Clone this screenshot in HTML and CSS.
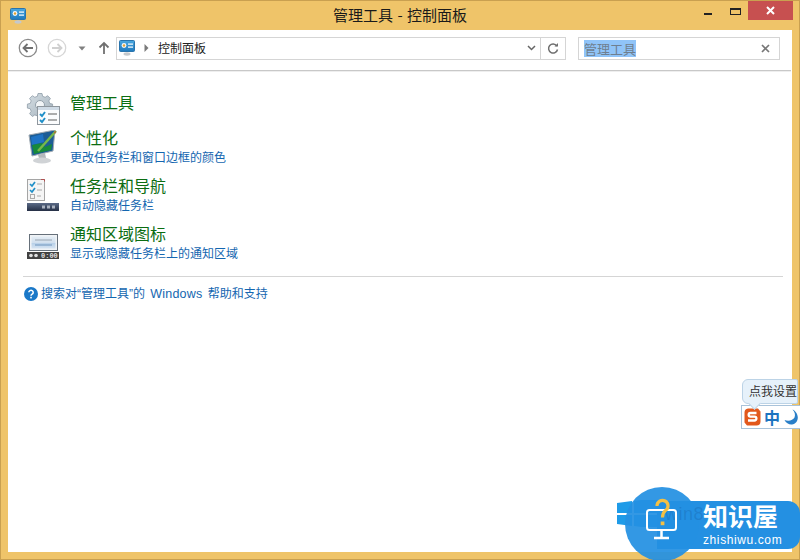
FILE: index.html
```html
<!DOCTYPE html>
<html lang="zh">
<head>
<meta charset="utf-8">
<title>管理工具 - 控制面板</title>
<link rel="stylesheet" href="styles.css">
</head>
<body>
<svg width="0" height="0" class="defs">
  <defs>
    <linearGradient id="cpBlue" x1="0" y1="0" x2="0" y2="1"><stop offset="0" stop-color="#4aa8e0"/><stop offset="1" stop-color="#1f79bd"/></linearGradient>
    <linearGradient id="barNavy" x1="0" y1="0" x2="0" y2="1"><stop offset="0" stop-color="#5a6a86"/><stop offset="1" stop-color="#252f45"/></linearGradient>
    <linearGradient id="gearGrey" x1="0" y1="0" x2="1" y2="1"><stop offset="0" stop-color="#d5dee4"/><stop offset="1" stop-color="#a3b1bb"/></linearGradient>
    <linearGradient id="paneBlue" x1="0" y1="0" x2="0" y2="1"><stop offset="0" stop-color="#e4edf5"/><stop offset="0.5" stop-color="#d2e0ee"/><stop offset="0.55" stop-color="#b8d0e8"/><stop offset="1" stop-color="#d6e4f2"/></linearGradient>
    <symbol id="cp" viewBox="0 0 16 16">
      <rect x="0.500" y="0.500" width="15" height="11" rx="1" fill="url(#cpBlue)" stroke="#2a74ac"/>
      <circle cx="5" cy="5.500" r="2.400" fill="#f4f8fb"/>
      <circle cx="5" cy="5.500" r="1.200" fill="#e0a030"/>
      <rect x="9" y="3.500" width="5" height="1.200" fill="#fff"/>
      <rect x="9" y="6.500" width="5" height="1.200" fill="#fff"/>
      <ellipse cx="8" cy="14" rx="3.500" ry="1.700" fill="#c4c8cc"/>
    </symbol>
  </defs>
</svg>
<div class="window">
  <header class="titlebar">
    <svg class="title-icon"><use href="#cp"/></svg>
    <div class="title">管理工具 - 控制面板</div>
    <div class="controls">
      <span class="min"></span>
      <span class="max"></span>
      <div class="close"><svg width="9" height="9" viewBox="0 0 9 9"><path d="M1 1l7 7M8 1l-7 7" stroke="#fff" stroke-width="2"/></svg></div>
    </div>
  </header>
  <main class="client">
    <nav class="toolbar">
      <svg class="nav-btn" viewBox="0 0 20 20"><circle cx="10" cy="10" r="8.700" fill="#fff" stroke="#8a8a8a" stroke-width="1.300"/><path d="M15 10H6M9.500 6L5.500 10l4 4" fill="none" stroke="#707070" stroke-width="1.800"/></svg>
      <svg class="nav-btn next" viewBox="0 0 20 20"><circle cx="10" cy="10" r="8.700" fill="#fff" stroke="#d6d6d6" stroke-width="1.300"/><path d="M5 10h9M10.500 6l4 4-4 4" fill="none" stroke="#d0d0d0" stroke-width="1.800"/></svg>
      <svg class="drop" viewBox="0 0 8 5"><path d="M0.500 0.500h7L4 4.500z" fill="#808080"/></svg>
      <svg class="up" viewBox="0 0 12 14"><path d="M6 13V2M1.500 6.500L6 2l4.500 4.500" fill="none" stroke="#707070" stroke-width="1.800"/></svg>
      <div class="address">
        <svg class="addr-icon"><use href="#cp"/></svg>
        <svg class="crumb" viewBox="0 0 5 8"><path d="M0.500 0v8L4.500 4z" fill="#7a7a7a"/></svg>
        <span class="addr-text">控制面板</span>
        <svg class="addr-chev" viewBox="0 0 9 6"><path d="M1 1l3.500 3.500L8 1" fill="none" stroke="#666" stroke-width="1.500"/></svg>
        <div class="refresh"><svg width="12" height="13" viewBox="0 0 12 13"><path d="M9.800 4A4.500 4.500 0 1 0 10.500 7.500" fill="none" stroke="#707070" stroke-width="1.500"/><path d="M7.500 4.500h3.500V1z" fill="#707070"/></svg></div>
      </div>
      <div class="search">
        <span class="search-text">管理工具</span>
        <svg class="clear" viewBox="0 0 9 9"><path d="M1 1l7 7M8 1l-7 7" stroke="#777" stroke-width="1.700"/></svg>
      </div>
    </nav>
    <div class="rule-top"></div>
    <section class="results">
      <div class="item item-first">
        <svg class="item-icon" viewBox="0 0 34 34">
          <path d="M12 0.500h4l.6 2.800 2.600 1 2.400-1.600 2.800 2.800-1.600 2.400 1 2.600 2.800.6v4l-2.800.6-1 2.600 1.600 2.400-2.800 2.800-2.400-1.600-2.600 1-.6 2.800h-4l-.6-2.800-2.600-1-2.400 1.600-2.800-2.800 1.600-2.400-1-2.600-2.800-.6v-4l2.800-.6 1-2.600-1.600-2.400 2.800-2.800 2.400 1.600 2.600-1z" fill="url(#gearGrey)" stroke="#8f9da8" stroke-width="0.800"/>
          <circle cx="14" cy="12" r="4.500" fill="#f2f5f7" stroke="#93a0aa"/>
          <rect x="11.500" y="13.500" width="22" height="18" fill="#fbfcfd" stroke="#8f979e"/>
          <rect x="12" y="14" width="21" height="3" fill="#cfdbe6"/>
          <path d="M14 21l2 2 3-4M14 27l2 2 3-4" fill="none" stroke="#1f8fc8" stroke-width="1.900"/>
          <path d="M22 21h9M22 27h9" stroke="#5d5d5d" stroke-width="1.100"/>
        </svg>
        <div class="item-text"><a class="item-title">管理工具</a></div>
      </div>
      <div class="item">
        <svg class="item-icon item-icon-low" viewBox="0 0 34 34">
          <path d="M3 5L29 0 27 21 6 26z" fill="#1d5d95" stroke="#a3abb2"/>
          <path d="M5 7l12-3 1 8-12 3z" fill="#1f73c4"/>
          <path d="M6 15l10-2 3 4 7-3-1 6-17 4z" fill="#17893a"/>
          <path d="M12 21L30 1" stroke="#76b84a" stroke-width="2.500"/>
          <path d="M28 2l2-1-1 3z" fill="#c84a3a"/>
          <path d="M12 25l7-2 1 5h-7z" fill="#b4b8bc"/>
          <ellipse cx="16" cy="30.500" rx="9" ry="3" fill="#d0d3d6"/>
        </svg>
        <div class="item-text"><a class="item-title">个性化</a><a class="item-sub">更改任务栏和窗口边框的颜色</a></div>
      </div>
      <div class="item">
        <svg class="item-icon item-icon-low" viewBox="0 0 34 34">
          <rect x="1.500" y="1.500" width="17" height="21" fill="#f5f5f5" stroke="#a5a5a5"/>
          <path d="M15 1.500h3.500v2" fill="none" stroke="#b05050"/>
          <path d="M4 6l2 2 3-4M4 12l2 2 3-4" fill="none" stroke="#1f8fc8" stroke-width="1.700"/>
          <path d="M11 6h5M11 12h5M11 18h4" stroke="#aaa"/>
          <rect x="4.500" y="16.500" width="4" height="4" fill="none" stroke="#aaa"/>
          <rect x="1" y="25" width="32" height="8" fill="url(#barNavy)"/>
          <rect x="16" y="27.500" width="3" height="3" fill="#aab2c0"/><rect x="21" y="27.500" width="3" height="3" fill="#aab2c0"/><rect x="26" y="27.500" width="3" height="3" fill="#aab2c0"/>
        </svg>
        <div class="item-text"><a class="item-title">任务栏和导航</a><a class="item-sub">自动隐藏任务栏</a></div>
      </div>
      <div class="item">
        <svg class="item-icon item-icon-low" viewBox="0 0 34 34">
          <rect x="3.500" y="8.500" width="28" height="16" fill="#f0f3f6" stroke="#66707a"/>
          <rect x="5.500" y="10.500" width="24" height="12" fill="url(#paneBlue)"/>
          <path d="M9 14h17" stroke="#9aa6b2"/>
          <path d="M9 19h17" stroke="#6f95bd"/>
          <rect x="1" y="26" width="32" height="7" fill="#424242"/>
          <circle cx="5" cy="29.500" r="1.800" fill="#e0e0e0"/><circle cx="10" cy="29.500" r="1.800" fill="#e0e0e0"/>
          <text class="tray-time" x="15" y="32">0:00</text>
        </svg>
        <div class="item-text"><a class="item-title">通知区域图标</a><a class="item-sub">显示或隐藏任务栏上的通知区域</a></div>
      </div>
      <div class="rule-mid"></div>
      <div class="help">
        <svg class="help-icon" viewBox="0 0 14 14"><circle cx="7" cy="7" r="7" fill="#1a78c8"/><path d="M4.800 5.300a2.200 2 0 1 1 3.300 1.800c-.8.5-1.100.8-1.100 1.700" fill="none" stroke="#fff" stroke-width="1.500"/><rect x="6.200" y="9.800" width="1.600" height="1.600" fill="#fff"/></svg>
        <a class="help-link">搜索对“管理工具”的 <span class="latin">Windows</span> 帮助和支持</a>
      </div>
    </section>
  </main>
</div>

<div class="ime">
  <div class="ime-tip">点我设置</div>
  <div class="ime-bar">
    <svg class="ime-s" viewBox="0 0 17 18"><path d="M4 0.500h10l2.500 3v10a4 4 0 0 1-4 4H3l-2.500-3v-10a4 4 0 0 1 3.500-4z" fill="#e2581c"/><path d="M12.500 5H6.500a1.700 1.700 0 0 0 0 3.700h4a1.800 1.800 0 0 1 0 3.800H4" fill="none" stroke="#fff" stroke-width="2.300"/></svg>
    <span class="ime-zh">中</span>
    <svg class="ime-moon" viewBox="0 0 14 16"><path d="M8.500 0.500C11 3 11.500 6 10.500 8.500 9 11.500 4.500 12.500 0.500 11c1.500 3 4.500 4.800 7.500 4.500 3.500-.4 5.800-3.500 5.800-7 0-3.500-2.300-6.800-5.300-8z" fill="#2a7fc8"/></svg>
  </div>
</div>

<div class="brand">
  <svg class="brand-win" viewBox="0 0 46 27"><path d="M0 3l15-2v12H0zM0 15h15v11L0 24zM17 1L46 -3V13H17zM17 15h29v15l-29-4z" fill="#1e9be8"/></svg>
  <div class="brand-pill">
    <div class="brand-cn">知识屋</div>
    <div class="brand-en">zhishiwu.com</div>
  </div>
  <div class="brand-disc">
    <span class="brand-ghost">win8</span>
    <svg class="brand-mark" width="36" height="42" viewBox="0 0 36 42">
      <rect x="3" y="12" width="29" height="20" rx="2.500" fill="none" stroke="#fff" stroke-width="2"/>
      <path d="M17.500 32v7M10 40h15" stroke="#fff" stroke-width="2.500"/>
      <path d="M13 8a5.500 5.500 0 1 1 8.500 4.500c-2 1.500-3 3-3 7" fill="none" stroke="#f4c044" stroke-width="3.200"/>
      <rect x="16.700" y="23.500" width="3.700" height="3.700" fill="#f4c044"/>
    </svg>
  </div>
</div>
</body>
</html>
```
FILE: styles.css
```css
* { box-sizing: border-box; }
html, body { margin: 0; height: 100%; overflow: hidden; }
body { position: relative; font-family: "Noto Sans CJK SC", "Liberation Sans", sans-serif; background: #efc46a; }
.defs { position: absolute; }
a { display: block; }

.window { width: 800px; height: 560px; padding: 0 8px 8px; display: flex; flex-direction: column; background: #efc469; box-shadow: inset 0 0 0 1px #c9a050; }
.titlebar { height: 30px; flex: none; display: flex; align-items: flex-start; position: relative; }
.title-icon { width: 16px; height: 16px; margin: 8px 0 0 2px; }
.title { position: absolute; left: 0; right: 0; top: 5px; text-align: center; font-size: 15px; line-height: 20px; color: #1a1a1a; word-spacing: 1px; }
.controls { margin-left: auto; margin-right: -1px; display: flex; align-items: flex-start; }
.min { width: 8px; height: 2px; background: #222; margin-top: 13px; }
.max { width: 11px; height: 7px; border: 1px solid #222; border-top-width: 2px; margin: 8px 0 0 18px; }
.close { width: 45px; height: 19px; margin: 1px 0 0 7px; background: #c75050; display: flex; align-items: center; justify-content: center; }

.client { flex: 1; background: #fff; display: flex; flex-direction: column; }
.toolbar { height: 40px; flex: none; display: flex; align-items: center; padding: 0 12px 4px 10px; }
.nav-btn { width: 20px; height: 20px; flex: none; }
.next { margin-left: 9px; }
.drop { width: 8px; height: 5px; margin-left: 11px; flex: none; }
.up { width: 12px; height: 14px; margin-left: 12px; flex: none; }
.address { width: 450px; height: 23px; margin-left: 6px; flex: none; border: 1px solid #d5d5d5; display: flex; align-items: center; padding-left: 2px; }
.addr-icon { width: 16px; height: 16px; flex: none; }
.crumb { width: 5px; height: 8px; margin-left: 9px; flex: none; }
.addr-text { font-size: 12px; line-height: 16px; color: #222; margin-left: 9px; }
.addr-chev { width: 9px; height: 6px; margin-left: auto; flex: none; }
.refresh { width: 25px; height: 21px; margin-left: 4px; border-left: 1px solid #d5d5d5; display: flex; align-items: center; justify-content: center; }
.search { width: 202px; height: 23px; margin-left: 12px; flex: none; border: 1px solid #d5d5d5; display: flex; align-items: center; padding: 0 9px 0 5px; }
.search-text { font-size: 13px; line-height: 17px; color: #6f7f8f; background: #90c4f8; }
.clear { width: 9px; height: 9px; margin-left: auto; flex: none; }
.rule-top { height: 2px; flex: none; background: #c8c8c8; border-bottom: 1px solid #eee; margin-right: 1px; }

.results { padding: 0 9px 0 15px; }
.item { display: flex; height: 48px; padding-left: 3px; }
.item-first { margin-top: 21px; height: 35px; }
.item-icon { width: 34px; height: 34px; flex: none; }
.item-icon-low { margin-top: 2px; }
.tray-time { font-family: "Liberation Mono", monospace; font-size: 7px; font-weight: 700; fill: #e0e0e0; }
.item-text { margin-left: 10px; margin-top: -1px; }
.item-title { font-size: 16px; line-height: 20px; color: #0b6d11; }
.item-sub { font-size: 12px; line-height: 16px; color: #1466b0; margin-top: 2px; }
.rule-mid { height: 1px; background: #d5d5d5; margin-top: 4px; }
.help { display: flex; align-items: center; margin-top: 9px; }
.help-icon { width: 14px; height: 14px; margin-left: 1px; flex: none; }
.help-link { font-family: "Liberation Sans", "Noto Sans CJK SC", sans-serif; font-size: 12px; line-height: 16px; color: #1466b0; margin-left: 3px; white-space: nowrap; word-spacing: 2px; }
.latin { font-size: 12.500px; letter-spacing: 0.200px; }

.ime { position: absolute; left: 741px; top: 379px; width: 59px; }
.ime-tip { position: relative; height: 25px; margin: 0 2px 0 1px; background: #e6f1fa; border: 1px solid #bcd3e6; border-radius: 6px 2px 2px 6px; font-size: 12px; line-height: 22px; padding-left: 6px; color: #333; white-space: nowrap; }
.ime-tip::after { content: ""; position: absolute; left: 7px; bottom: -5px; width: 8px; height: 8px; background: #e6f1fa; border: 1px solid #bcd3e6; border-top: 0; border-left: 0; transform: rotate(45deg); z-index: 1; }
.ime-bar { height: 24px; margin-top: 1px; background: #fff; border: 1px solid #a9c3da; border-right: 0; display: flex; align-items: center; padding-left: 2px; }
.ime-s { width: 17px; height: 18px; flex: none; }
.ime-zh { font-size: 16px; font-weight: 700; color: #1b74c0; margin-left: 3px; line-height: 20px; }
.ime-moon { width: 14px; height: 16px; margin-left: 4px; flex: none; }

.brand { position: absolute; left: 617px; top: 487px; width: 183px; height: 73px; }
.brand-win { position: absolute; left: 0; top: 13px; width: 46px; height: 27px; }
.brand-pill { position: absolute; left: 40px; top: 14px; width: 143px; height: 48px; background: #2490e2; border-radius: 0 12px 12px 0; padding-left: 46px; color: #fff; }
.brand-cn { font-size: 25px; font-weight: 700; line-height: 30px; white-space: nowrap; margin-top: -1px; }
.brand-en { font-family: "Liberation Sans", sans-serif; font-size: 12px; line-height: 15px; letter-spacing: 0.6px; white-space: nowrap; margin-top: 3px; }
.brand-disc { position: absolute; left: 8px; top: 0; width: 74px; height: 74px; border-radius: 50%; background: rgba(36, 144, 226, 0.93); display: flex; align-items: flex-start; justify-content: center; padding-top: 11px; }
.brand-mark { position: relative; }
.brand-ghost { position: absolute; left: 40px; top: 18px; font-family: "Liberation Sans", sans-serif; font-size: 18px; line-height: 18px; letter-spacing: 0.5px; color: rgba(25, 100, 170, 0.35); }
```
